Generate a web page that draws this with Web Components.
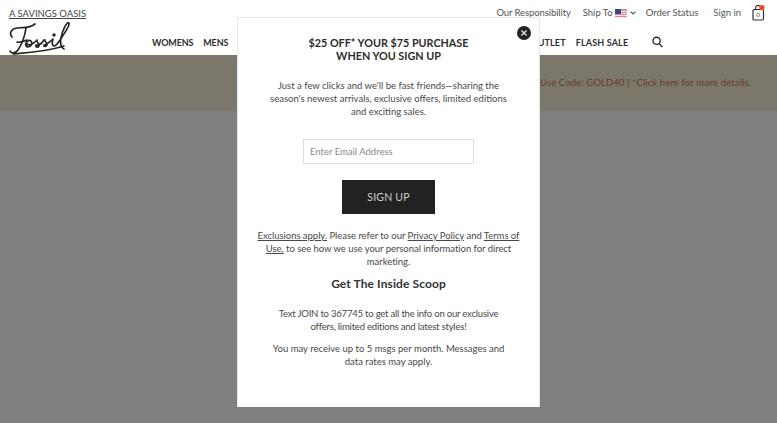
<!DOCTYPE html>
<html lang="en"><head><meta charset="utf-8"><title>Fossil</title>
<style>
html,body{margin:0;padding:0;height:100%;overflow:hidden;background:#fff;font-family:Lato,"Noto Sans",sans-serif;}
body{position:relative;width:777px;height:423px;}
</style></head><body>
<site-header></site-header>
<promo-banner>Use Code: GOLD40 | *Click here for more details.</promo-banner>
<page-scrim></page-scrim>
<signup-modal></signup-modal>
<script>
function def(name, html){
  customElements.define(name, class extends HTMLElement{
    constructor(){super();this.attachShadow({mode:'open'}).innerHTML=html;}
  });
}
def('fossil-logo',`<style>:host{display:block;width:62px;height:33px}svg{display:block}</style>
<svg width="62" height="33" viewBox="0 0 62 33" fill="none" stroke="#262626" stroke-width="1.7" stroke-linecap="round" stroke-linejoin="round">
<path d="M3 15C0 11 2 7 8 6C14 5 20 7 26 2"/>
<path d="M17 6C16 13 13 22 9 28C7 31 2 32 1 29"/>
<path d="M8 20C11 21 15 19 18 18"/>
<path d="M4 32C16 31 36 30 55 24"/>
<path d="M17 24C16 20 20 17 22 19C24 21 22 25 19 25C18 25 17 24 18 22C21 24 24 22 27 19"/>
<path d="M28 18C27 20 31 22 30 24C29 26 26 25 27 23C30 24 33 21 35 18"/>
<path d="M36 18C35 20 39 21 38 23C37 25 34 25 35 23C38 23 40 20 43 18"/>
<path d="M44 17C43 20 43 24 45 24C47 24 50 20 53 15C56 10 61 4 60 1C58 -1 53 9 52 16C51 21 52 26 55 27"/>
<circle cx="45" cy="13" r=".9" fill="#262626"/>
</svg>`);
def('site-header',`<style>
:host{display:block;height:55px;background:#fff;position:relative;color:#3a3a3a}
.left{display:flex;flex-direction:column;padding:8px 0 0 9px;box-sizing:border-box;height:55px}
.sav{font-size:9.5px;line-height:12px;text-decoration:underline;color:#444;height:14px;white-space:nowrap}
.row{display:flex;align-items:flex-end}
nav{display:flex;gap:10px;margin-left:81px;font-size:9px;font-weight:700;letter-spacing:.15px;color:#2e2e2e;line-height:12px;padding-bottom:6px;white-space:nowrap}
.tight{letter-spacing:-.15px}
.spacer{width:282px}
.search{margin-left:24px;padding-bottom:7px}
.search svg{display:block}
.util{position:absolute;top:5px;right:12px;display:flex;align-items:center;font-size:9.5px;color:#555;line-height:14px;white-space:nowrap}
.resp{letter-spacing:-.1px}
.ship{display:flex;align-items:center;margin-left:12px}
.flag{margin-left:2px;display:block}
.chev{margin-left:3px;display:block}
.order{margin-left:10px}.sign{margin-left:15px}
.bag{margin-left:11px;display:block}
</style>
<div class="left">
<div class="sav">A SAVINGS OASIS</div>
<div class="row"><fossil-logo></fossil-logo>
<nav><span class="tight">WOMENS</span><span class="tight">MENS</span><span class="spacer"></span><span>OUTLET</span><span>FLASH SALE</span></nav>
<div class="search"><svg width="11" height="12" viewBox="0 0 11 12" fill="none" stroke="#2a2a2a" stroke-width="1.4"><circle cx="4.6" cy="4.8" r="3.6"/><path d="M7.2 7.6L10.3 11"/></svg></div>
</div></div>
<div class="util"><span class="resp">Our Responsibility</span>
<div class="ship"><span>Ship To</span>
<svg class="flag" width="12" height="9" viewBox="0 0 12 9"><rect width="12" height="9" fill="#d98a94"/><rect y="2" width="12" height="1" fill="#f3e6e8"/><rect y="4" width="12" height="1" fill="#f3e6e8"/><rect y="6" width="12" height="1" fill="#f3e6e8"/><rect y="8" width="12" height="1" fill="#f3e6e8"/><rect width="6" height="5" fill="#39478a"/></svg>
<svg class="chev" width="6" height="4" viewBox="0 0 6 4" fill="none" stroke="#555" stroke-width="1.1"><path d="M.6.6L3 3L5.4.6"/></svg></div>
<span class="order">Order Status</span><span class="sign">Sign in</span>
<svg class="bag" width="13" height="16" viewBox="0 0 13 16" fill="none"><rect x="1" y="4.5" width="10.5" height="10.5" rx="1.2" stroke="#333" stroke-width="1.2"/><path d="M3.6 4.5V3A2.6 2.6 0 0 1 8.8 3V4.5" stroke="#333" stroke-width="1.1"/><circle cx="6.2" cy="10" r="1.6" stroke="#888" stroke-width=".9"/><circle cx="10" cy="2.6" r="2.6" fill="#f0481f"/></svg>
</div>`);
def('promo-banner',`<style>:host{display:flex;justify-content:flex-end;align-items:center;height:56px;background:#f6f0d7;box-sizing:border-box;padding-right:26px;font-size:9.5px;letter-spacing:.12px;color:#d8705a;line-height:14px;white-space:nowrap}</style><slot></slot>`);
def('page-scrim',`<style>:host{display:block;position:absolute;left:0;right:0;top:55px;bottom:0;background:rgba(0,0,0,.5)}</style>`);
def('signup-modal',`<style>
:host{display:block;position:absolute;left:237px;top:17px;width:303px;height:390px;box-sizing:border-box;background:#fff;border:1px solid #e6e6e6;border-bottom:0;color:#484848;text-align:center;font-size:9.5px;line-height:13px}
.close{position:absolute;top:8px;right:8px;width:14px;height:14px;display:block}
.in{display:flex;flex-direction:column;align-items:center;padding:18px 0 0}
h2{margin:0;font-size:10.8px;line-height:13px;font-weight:700;color:#2c2c2c}
.lead{margin:17px 0 0;width:245px}
.input{box-sizing:border-box;width:171px;height:25px;margin-top:21px;border:1px solid #ddd;text-align:left;padding:0 6px;line-height:23px;color:#8a8a8a}
.btn{margin-top:16px;width:93px;height:34px;background:#222;color:#ccc;line-height:34px;font-size:10.5px;letter-spacing:.2px}
.legal{margin:15px 0 0;white-space:nowrap;letter-spacing:-.04px}
a{color:inherit;text-decoration:underline}
h3{margin:9px 0 0;font-size:12px;line-height:14px;font-weight:700;letter-spacing:.1px;color:#333}
.txt{margin:16px 0 0;letter-spacing:-.2px}
.rate{margin:9px 0 0}
</style>
<svg class="close" viewBox="0 0 14 14"><circle cx="7" cy="7" r="7" fill="#222"/><path d="M4.4 4.4L9.6 9.6M9.6 4.4L4.4 9.6" stroke="#ddd" stroke-width="1.4"/></svg>
<div class="in">
<h2>$25 OFF* YOUR $75 PURCHASE<br>WHEN YOU SIGN UP</h2>
<p class="lead">Just a few clicks and we'll be fast friends—sharing the season's newest arrivals, exclusive offers, limited editions and exciting sales.</p>
<div class="input">Enter Email Address</div>
<div class="btn">SIGN UP</div>
<p class="legal"><a>Exclusions apply.</a> Please refer to our <a>Privacy Policy</a> and <a>Terms of<br>Use,</a> to see how we use your personal information for direct<br>marketing.</p>
<h3>Get The Inside Scoop</h3>
<p class="txt">Text JOIN to 367745 to get all the info on our exclusive<br>offers, limited editions and latest styles!</p>
<p class="rate">You may receive up to 5 msgs per month. Messages and<br>data rates may apply.</p>
</div>`);
</script>
</body></html>
